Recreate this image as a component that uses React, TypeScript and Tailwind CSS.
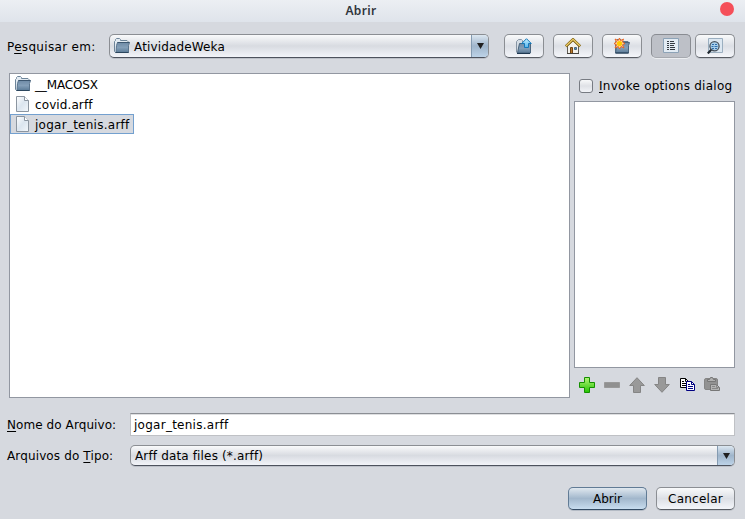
import React from "react";

const BUTTON =
  "flex items-center justify-center rounded-[5px] border border-[#8b8e93] border-b-[#585c63] bg-linear-to-b from-[#f9fafb] via-[#dcdfe5] to-[#f4f6fa] shadow-[0_1px_0_#bfc3ca]";
const COMBO =
  "flex overflow-hidden rounded-[5px] border border-[#8b8e93] border-b-[#4d525d] bg-linear-to-b from-[#f9fafb] via-[#d8dbe1] to-[#f2f4f9] shadow-[0_1px_0_#bcc0c8]";

function Gradients() {
  return (
    <svg className="absolute h-0 w-0" aria-hidden="true">
      <defs>
        <linearGradient id="folder" x1="0" y1="0" x2="0" y2="1">
          <stop offset="0" stopColor="#6f8ba6" />
          <stop offset="0.5" stopColor="#849fb8" />
          <stop offset="1" stopColor="#5b7b97" />
        </linearGradient>
        <linearGradient id="page" x1="0" y1="0" x2="1" y2="1">
          <stop offset="0" stopColor="#ffffff" />
          <stop offset="0.5" stopColor="#dbe5ef" />
          <stop offset="1" stopColor="#f3f7fb" />
        </linearGradient>
        <linearGradient id="arrowBlue" x1="0" y1="0" x2="0" y2="1">
          <stop offset="0" stopColor="#c8f0ff" />
          <stop offset="1" stopColor="#52b4ee" />
        </linearGradient>
        <linearGradient id="plus" x1="0" y1="0" x2="0" y2="1">
          <stop offset="0" stopColor="#b5f478" />
          <stop offset="1" stopColor="#23c400" />
        </linearGradient>
      </defs>
    </svg>
  );
}

function Folder() {
  return (
    <svg width="16" height="16" viewBox="0 0 16 16" className="shrink-0">
      <path d="M1.5 14.5 .5 13.5V3.5L1.5 2.5V1.5L2.5.5h3l1 1v1h6.5l1 1v3z" fill="#e3ebf2" stroke="#6d8499" />
      <path d="M3.5 4.5h12l-1 3v7H2l.5-7z" fill="url(#folder)" stroke="#5a748d" />
      <path d="M3.5 4.5h12" stroke="#3c566f" />
      <path d="M1.5 14.5h13" stroke="#2b465e" />
    </svg>
  );
}

function FileIcon() {
  return (
    <svg width="16" height="16" viewBox="0 0 16 16" className="shrink-0">
      <path d="M1.5.5h8l4 4v11h-12z" fill="url(#page)" stroke="#8b95a0" />
      <path d="M9.5.5v4h4" fill="#fff" stroke="#8b95a0" />
    </svg>
  );
}

function UpFolder() {
  return (
    <svg width="16" height="16" viewBox="0 0 16 16">
      <path d="M.5 14.5V3.5l2-2h3l1 1v2" fill="#d5dde5" stroke="#8795a4" />
      <path d="M3.5 5.5h11v9.5h-13l1-5z" fill="url(#folder)" stroke="#4a647c" />
      <path d="M1 15.5h13" stroke="#1e3850" />
      <path d="M10.5.7 15.3 5.5H12.5v4h-4v-4h-2.8z" fill="url(#arrowBlue)" stroke="#1678b8" />
    </svg>
  );
}

function Home() {
  return (
    <svg width="16" height="16" viewBox="0 0 16 16">
      <path d="M2.5 8v7.5h11V8L8 2.5z" fill="#f3f1eb" stroke="#615e57" />
      <path d="M.8 8.3 8 1.5l7.2 6.8" fill="none" stroke="#806010" strokeWidth="2.8" />
      <path d="M1 8 8 1.3 15 8" fill="none" stroke="#edcf69" strokeWidth="1.2" />
      <path d="M5.5 15.5v-6h2v6z" fill="#b77a29" stroke="#704416" />
      <path d="M9.5 9.5h2v2h-2z" fill="#3b91cd" stroke="#4e6678" />
      <path d="M2 15.5h12" stroke="#45423c" />
    </svg>
  );
}

function NewFolder() {
  return (
    <svg width="16" height="16" viewBox="0 0 16 16">
      <path d="M1.5 14.5V3.5L3 1.5h4l2 2h5v3" fill="#dfe6ed" stroke="#61798f" />
      <path d="M3 4.5h12.5l-1 3v7.5H1.5z" fill="url(#folder)" stroke="#4a647c" />
      <path d="M1.5 15h13" stroke="#1e3850" />
      <path
        d="M5.5 0 6.5 2.7 9.5 1 8.4 4 11 5.5 8.4 6.8 10 10 7 8.5 5.5 11 4.3 8.5 1 10 2.6 6.8 0 5.5 2.6 4 1 1 4.2 2.6z"
        fill="#ffd9a0"
        stroke="#ec5c19"
        strokeWidth=".9"
      />
      <circle cx="5.5" cy="5.5" r="2.6" fill="#ffc800" />
    </svg>
  );
}

function ListIcon() {
  return (
    <svg width="16" height="16" viewBox="0 0 16 16">
      <path d="M.5.5h15v14H.5z" fill="#e2ebf3" stroke="#8da3b7" />
      <path d="M4 3.5h2M4 5.5h2M4 7.5h2M4 9.5h2M4 11.5h2M7 3.5h4M7 5.5h5M7 7.5h4M7 9.5h5M7 11.5h5" stroke="#353c43" />
    </svg>
  );
}

function DetailsIcon() {
  return (
    <svg width="16" height="16" viewBox="0 0 16 16">
      <path d="M1.5.5h14v14h-14z" fill="#dce7f1" stroke="#9bafc0" />
      <path d="m.8 15.4 3.7-3.9" stroke="#202830" strokeWidth="2.2" />
      <circle cx="7.5" cy="8.2" r="4.6" fill="#a8cfec" stroke="#49535d" strokeWidth="1.3" />
      <path d="M5 6.5h2m1 0h2M4.5 8.5h2m1 0h3M5 10.5h2m1 0h2" stroke="#316eab" />
    </svg>
  );
}

function SidebarActions() {
  return (
    <div className="flex h-4 gap-[9px] pl-[5px]">
      <svg width="16" height="16" viewBox="0 0 16 16">
        <path d="M5.5.5h5v5h5v5h-5v5h-5v-5h-5v-5h5z" fill="url(#plus)" stroke="#149000" />
      </svg>
      <svg width="16" height="16" viewBox="0 0 16 16">
        <path d="M.5 5.5h15v5H.5z" fill="#909090" stroke="#999" />
      </svg>
      <svg width="16" height="16" viewBox="0 0 16 16">
        <path d="M8 .7 15.3 8.5H11.5v7h-7v-7H.7z" fill="#999" stroke="#858585" />
      </svg>
      <svg width="16" height="16" viewBox="0 0 16 16">
        <path d="M8 15.3 15.3 7.5H11.5V.5h-7v7H.7z" fill="#999" stroke="#858585" />
      </svg>
      <svg width="16" height="16" viewBox="0 0 16 16">
        <path d="M1.5 1.5h5l3 3v6h-8z" fill="#fff" stroke="#000" />
        <path d="M6.5 1.5v3h3M3 4.5h2M3 6.5h5M3 8.5h5" fill="none" stroke="#000" />
        <path d="M7.5 4.5h5l3 3v6h-8z" fill="#fff" stroke="#000080" />
        <path d="M12.5 4.5v3h3M9 7.5h2M9 9.5h5M9 11.5h5" fill="none" stroke="#000080" />
      </svg>
      <svg width="16" height="16" viewBox="0 0 16 16">
        <rect x=".5" y="1.5" width="13" height="11" rx="1.5" fill="#929292" stroke="#858585" />
        <path d="M3.5 4.5v-2h2l1-2h2l1 2h2v2z" fill="#b0b0b0" stroke="#777" />
        <path d="M6.5 7.5h6l3 3v3h-9z" fill="#b4b4b4" stroke="#777" />
        <path d="M12.5 7.5v3h3M8 9.5h3M8 11.5h6" fill="none" stroke="#888" />
      </svg>
    </div>
  );
}

function ComboArrow() {
  return (
    <span className="flex w-[17px] items-center justify-center border-l border-[#849bb1] bg-linear-to-b from-[#dce7f1] via-[#9fb5cb] to-[#bdd3e8]">
      <svg width="7" height="6" viewBox="0 0 7 6">
        <path d="M0 0h7L3.5 6z" fill="#202020" />
      </svg>
    </span>
  );
}

function Mnemonic({ children }: { children: React.ReactNode }) {
  return <span className="underline decoration-1 underline-offset-2">{children}</span>;
}

interface FileRowProps {
  name: string;
  icon: React.ReactNode;
  tracking: string;
  selected?: boolean;
}

function FileRow({ name, icon, tracking, selected = false }: FileRowProps) {
  return (
    <div
      className={`flex h-5 w-fit items-center gap-1 border pr-[3px] pl-1 ${
        selected ? "border-[#73a0cf] bg-[#d6d9df]" : "border-transparent"
      }`}
    >
      {icon}
      <span className={`pt-[2px] leading-4 ${tracking}`}>{name}</span>
    </div>
  );
}

export default function App() {
  return (
    <div className="flex h-[519px] w-[745px] flex-col overflow-hidden bg-[#d6d9df] font-['DejaVu_Sans',sans-serif] text-[12px] leading-4 whitespace-nowrap text-black">
      <Gradients />
      <header className="flex h-[22px] shrink-0 items-center bg-linear-to-b from-[#eceff3] to-[#dfe4eb] pr-[11px]">
        <span className="grow pr-[1px] pl-[3px] text-center font-['Noto_Sans',sans-serif] text-[12px] font-semibold tracking-[0.35px] text-[#30343b]">
          Abrir
        </span>
        <span className="mb-1 size-[14px] rounded-full bg-[#f54f59]" />
      </header>

      <div className="flex h-9 shrink-0 items-end pr-[10px] pl-[7px]">
        <label className="mb-[3px] w-[102px] tracking-[0.32px]">
          P<Mnemonic>e</Mnemonic>squisar em:
        </label>
        <div className={`${COMBO} h-6 w-[380px]`}>
          <span className="flex grow items-center gap-1 pl-1 tracking-[0.14px]">
            <Folder />
            <span className="pt-[2px]">AtividadeWeka</span>
          </span>
          <ComboArrow />
        </div>
        <div className="ml-[15px] flex gap-[9px]">
          <button className={`${BUTTON} h-6 w-10`}><UpFolder /></button>
          <button className={`${BUTTON} h-6 w-10`}><Home /></button>
          <button className={`${BUTTON} h-6 w-10`}><NewFolder /></button>
        </div>
        <div className="ml-[9px] flex gap-1">
          <button className="flex h-6 w-10 items-center justify-center rounded-[5px] border border-[#898c92] border-b-[#a6a9af] bg-[#bdc0c7] shadow-[0_1px_0_#eceef1]">
            <ListIcon />
          </button>
          <button className={`${BUTTON} h-6 w-10`}><DetailsIcon /></button>
        </div>
      </div>

      <main className="mt-[15px] flex h-[325px] shrink-0 gap-1 pr-[10px] pl-[9px]">
        <section className="w-[561px] border border-[#9297a1] bg-white">
          <FileRow name="__MACOSX" icon={<Folder />} tracking="tracking-[-0.15px]" />
          <FileRow name="covid.arff" icon={<FileIcon />} tracking="tracking-[0.1px]" />
          <FileRow name="jogar_tenis.arff" icon={<FileIcon />} tracking="tracking-[0.26px]" selected />
        </section>
        <aside className="flex w-[161px] flex-col">
          <label className="flex h-7 items-center gap-[6px] pb-[3px] pl-[5px]">
            <span className="size-[14px] rounded-[3px] border border-[#777b82] bg-linear-to-b from-[#f8f9fa] via-[#dfe1e6] to-[#f2f4f8]" />
            <span className="tracking-[0.26px]"><Mnemonic>I</Mnemonic>nvoke options dialog</span>
          </label>
          <div className="mb-[9px] h-[267px] border border-[#9297a1] bg-white" />
          <SidebarActions />
        </aside>
      </main>

      <form className="mt-[15px] flex flex-col gap-[9px] pr-[10px] pl-[7px]">
        <div className="flex h-[23px] items-center">
          <label className="w-[123px] tracking-[0.08px]"><Mnemonic>N</Mnemonic>ome do Arquivo:</label>
          <div className="flex h-[23px] w-[605px] items-center border border-[#bfc1c5] border-t-[#8b8e94] bg-white pl-[3px] tracking-[0.26px] shadow-[inset_0_1px_0_#dedfe1]">
            jogar_tenis.arff
          </div>
        </div>
        <div className="flex h-[21px] items-center">
          <label className="w-[123px] tracking-[0.13px]">Arquivos do <Mnemonic>T</Mnemonic>ipo:</label>
          <div className={`${COMBO} h-[21px] w-[605px]`}>
            <span className="flex grow items-center pl-1 tracking-[0.15px]">Arff data files (*.arff)</span>
            <ComboArrow />
          </div>
        </div>
      </form>

      <footer className="mt-[21px] flex justify-end gap-[9px] pr-[10px]">
        <button className="h-[23px] w-[79px] rounded-[5px] border border-[#617b95] border-b-[#344c65] bg-linear-to-b from-[#e0e8ef] via-[#a2b7cc] to-[#c8ddef] shadow-[0_1px_0_#b4bbc5]">
          Abrir
        </button>
        <button className={`${BUTTON} h-[23px] w-[79px] tracking-[0.25px]`}>Cancelar</button>
      </footer>
    </div>
  );
}
